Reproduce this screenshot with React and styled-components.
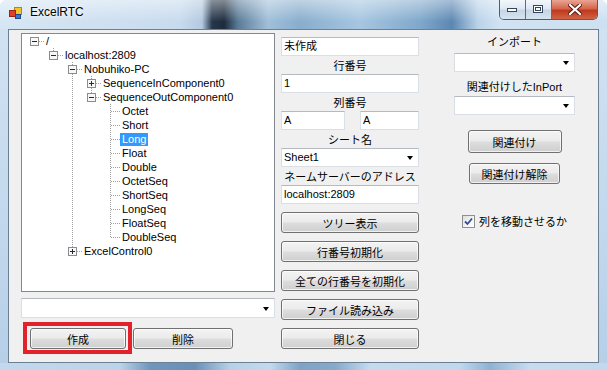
import React from 'react';
import styled, { createGlobalStyle } from 'styled-components';

const GlobalStyle = createGlobalStyle`
  html, body {
    margin: 0;
    padding: 0;
    background: #ffffff;
  }
  body {
    font-family: 'Liberation Sans', 'Noto Sans CJK JP', sans-serif;
    font-size: 11px;
    color: #000;
  }
`;

const Window = styled.div`
  width: 607px;
  height: 370px;
  display: flex;
  flex-direction: column;
  border-radius: 7px 7px 0 0;
  overflow: hidden;
  background: linear-gradient(180deg, #d3e3f2 0%, #c4d9ed 55%, #b6cfe7 100%);
`;

const TitleBar = styled.div`
  height: 29px;
  flex: none;
  display: flex;
  align-items: flex-start;
  padding-left: 9px;
  background:
    linear-gradient(180deg, rgba(255, 255, 255, 0.45), rgba(255, 255, 255, 0) 75%),
    linear-gradient(
      90deg,
      #d6e6f4 0px,
      #c8dbee 180px,
      #b3c9df 202px,
      #26374b 212px,
      #1d2b3c 224px,
      #5a7b98 238px,
      #a0bfd9 268px,
      #88adcd 300px,
      #a6c6e0 360px,
      #7fa8cb 420px,
      #5c87b2 452px,
      #bad3e9 478px,
      #d1e3f2 500px,
      #cde0f0 607px
    );
`;

const AppIcon = styled.svg`
  flex: none;
  margin-top: 6px;
  display: block;
`;

const Caption = styled.span`
  margin: 5px 0 0 8px;
  font-family: 'Liberation Sans', 'Open Sans', sans-serif;
  font-size: 12px;
  line-height: 15px;
  color: #000;
  text-shadow: 0 0 6px rgba(255, 255, 255, 0.95), 0 0 2px rgba(255, 255, 255, 0.9);
`;

const CaptionButtons = styled.div`
  margin-left: auto;
  margin-right: 9px;
  display: flex;
  height: 19px;
  border: 1px solid #4b5e74;
  border-top: none;
  border-radius: 0 0 5px 5px;
  overflow: hidden;
`;

const CaptionButton = styled.div`
  width: ${p => p.$w}px;
  height: 19px;
  display: flex;
  align-items: center;
  justify-content: center;
  border-left: ${p => (p.$first ? 'none' : '1px solid #5b6e85')};
  background: ${p =>
    p.$close
      ? 'linear-gradient(180deg, #e9a593 0%, #d5664c 45%, #bf3a1e 55%, #d26244 100%)'
      : 'linear-gradient(180deg, #f3f7fb 0%, #dfe8f2 45%, #c6d6e6 55%, #d7e4f0 100%)'};
`;

const Client = styled.div`
  margin: 0 8px;
  height: 334px;
  box-sizing: border-box;
  flex: none;
  display: flex;
  align-items: flex-start;
  border: 1px solid #6b7f95;
  background: #f0f0f0;
`;

const BottomEdge = styled.div`
  flex: 1;
  background: linear-gradient(
    90deg,
    #c3d8ec 0px,
    #bcd3e8 120px,
    #7096bb 150px,
    #6b90b6 195px,
    #b8d0e6 230px,
    #c4d9ec 270px,
    #7fa3c6 300px,
    #86a9ca 335px,
    #c6daed 370px,
    #c1d7eb 460px,
    #8fb2d2 490px,
    #c9dcee 530px,
    #c2d8ec 607px
  );
`;

/* ---------- left column ---------- */

const LeftColumn = styled.div`
  width: 254px;
  margin: 3px 0 0 12px;
  display: flex;
  flex-direction: column;
`;

const TreeBox = styled.div`
  height: 259px;
  box-sizing: border-box;
  border: 1px solid #828790;
  background: #fff;
  padding: 0 0 0 3px;
  overflow: hidden;
`;

const TreeRow = styled.div`
  display: flex;
  align-items: center;
  height: 14px;
`;

const CellSvg = styled.svg`
  flex: none;
  display: block;
`;

const TreeText = styled.span`
  height: 13px;
  line-height: 13px;
  padding: 0 2px;
  white-space: nowrap;
  color: ${p => (p.$selected ? '#fff' : '#000')};
  background: ${p => (p.$selected ? '#3399ff' : 'transparent')};
`;

const BottomRow = styled.div`
  display: flex;
  align-items: flex-start;
  margin-top: 4px;
  padding-left: 2px;
`;

const Highlight = styled.div`
  border: 4px solid #e3212b;
  padding: 2px 2px 1px 3px;
  display: flex;
`;

/* ---------- shared controls ---------- */

const TextBox = styled.div`
  height: ${p => p.$h || 19}px;
  width: ${p => (p.$w ? `${p.$w}px` : 'auto')};
  box-sizing: border-box;
  border: 1px solid #dadee5;
  border-top-color: #b5b9c0;
  background: #fff;
  padding-left: 2px;
  line-height: 17px;
  white-space: nowrap;
`;

const Combo = styled.div`
  height: ${p => p.$h || 19}px;
  box-sizing: border-box;
  display: flex;
  align-items: center;
  border: 1px solid #dadee5;
  border-top-color: #b5b9c0;
  background: #fff;
  padding: 0 5px 0 2px;
  margin-top: ${p => p.$mt || 0}px;
`;

const ComboText = styled.span`
  flex: 1;
  line-height: 17px;
`;

const Arrow = styled.span`
  flex: none;
  width: 0;
  height: 0;
  border-left: 3.5px solid transparent;
  border-right: 3.5px solid transparent;
  border-top: 4px solid #000;
  margin-top: 1px;
`;

const Button = styled.button`
  width: ${p => p.$w}px;
  height: ${p => p.$h || 21}px;
  flex: none;
  margin: ${p => p.$m || '0'};
  padding: 0;
  box-sizing: border-box;
  border: 1px solid #707070;
  border-radius: 3px;
  font: inherit;
  font-size: 11px;
  color: #000;
  background: linear-gradient(180deg, #f3f3f3 0%, #ebebeb 48%, #dddddd 52%, #cfcfcf 100%);
  box-shadow: inset 0 0 0 1px rgba(255, 255, 255, 0.7);
  display: flex;
  align-items: center;
  justify-content: center;
`;

const FieldLabel = styled.div`
  height: ${p => p.$h || 18}px;
  box-sizing: border-box;
  padding-top: ${p => p.$pt ?? 3}px;
  margin-top: ${p => p.$mt || 0}px;
  line-height: 15px;
  text-align: center;
  white-space: nowrap;
`;

/* ---------- middle column ---------- */

const MiddleColumn = styled.div`
  width: 138px;
  margin: 7px 0 0 6px;
  display: flex;
  flex-direction: column;
`;

const PairRow = styled.div`
  display: flex;
  justify-content: space-between;
`;

const ButtonStack = styled.div`
  display: flex;
  flex-direction: column;
  gap: 8px;
  margin-top: 8px;
`;

/* ---------- right column ---------- */

const RightColumn = styled.div`
  width: 121px;
  margin: 5px 0 0 35px;
  display: flex;
  flex-direction: column;
  align-items: stretch;
`;

const CenteredButton = styled(Button)`
  align-self: center;
`;

const CheckRow = styled.label`
  display: flex;
  align-items: center;
  gap: 4px;
  margin: 29px 0 0 8px;
  white-space: nowrap;
`;

const CheckBox = styled.span`
  width: 13px;
  height: 13px;
  flex: none;
  box-sizing: border-box;
  border: 1px solid #8e8f8f;
  background: linear-gradient(135deg, #dcdcdc 0%, #f6f6f6 60%, #ffffff 100%);
  display: flex;
  align-items: center;
  justify-content: center;
`;

/* ---------- tree data ---------- */

const leafNames = [
  'Octet', 'Short', 'Long', 'Float', 'Double',
  'OctetSeq', 'ShortSeq', 'LongSeq', 'FloatSeq', 'DoubleSeq',
];

const treeData = {
  label: '/',
  open: true,
  children: [
    {
      label: 'localhost:2809',
      open: true,
      children: [
        {
          label: 'Nobuhiko-PC',
          open: true,
          children: [
            { label: 'SequenceInComponent0', open: false, children: [{ label: 'in' }] },
            {
              label: 'SequenceOutComponent0',
              open: true,
              children: leafNames.map(n => ({ label: n, selected: n === 'Long' })),
            },
          ],
        },
        { label: 'ExcelControl0', open: false, children: [{ label: 'ctl' }] },
      ],
    },
  ],
};

function flatten(node, depth, guides, isLast, out) {
  const hasKids = !!node.children;
  out.push({
    label: node.label,
    depth,
    guides,
    isLast,
    expander: hasKids ? (node.open ? 'minus' : 'plus') : null,
    selected: node.selected,
  });
  if (hasKids && node.open) {
    node.children.forEach((c, i) =>
      flatten(c, depth + 1, [...guides, !isLast], i === node.children.length - 1, out)
    );
  }
  return out;
}

const rows = flatten(treeData, 0, [], true, []);

const dot = { stroke: '#a0a0a0', strokeWidth: 1, strokeDasharray: '1 1' };

function GuideCell({ on }) {
  return (
    <CellSvg width="19" height="14">
      {on && <line x1="9.5" y1="0" x2="9.5" y2="14" {...dot} />}
    </CellSvg>
  );
}

function NodeCell({ depth, isLast, expander }) {
  return (
    <CellSvg width="19" height="14">
      {depth > 0 && <line x1="9.5" y1="0" x2="9.5" y2="7" {...dot} />}
      {!isLast && <line x1="9.5" y1="8" x2="9.5" y2="14" {...dot} />}
      <line x1="10" y1="7.5" x2="19" y2="7.5" {...dot} />
      {expander && (
        <g>
          <rect x="5.5" y="3.5" width="8" height="8" fill="#f7f7f7" stroke="#8c8c8c" />
          <line x1="7" y1="7.5" x2="12" y2="7.5" stroke="#1f2a3a" />
          {expander === 'plus' && <line x1="9.5" y1="5" x2="9.5" y2="10" stroke="#1f2a3a" />}
        </g>
      )}
    </CellSvg>
  );
}

function App() {
  return (
    <>
      <GlobalStyle />
      <Window>
        <TitleBar>
          <AppIcon width="13" height="13" viewBox="0 0 13 13">
            <rect x="5.5" y="1.5" width="7" height="7" fill="#f6c22a" stroke="#b8860b" />
            <rect x="0.5" y="4.5" width="6" height="6" fill="#e0402a" stroke="#9a2414" />
            <rect x="6.5" y="8.5" width="5" height="4" fill="#3a78d0" stroke="#1c4a8c" />
          </AppIcon>
          <Caption>ExcelRTC</Caption>
          <CaptionButtons>
            <CaptionButton $w={25} $first>
              <svg width="11" height="6" viewBox="0 0 11 6">
                <rect x="0.5" y="1.5" width="9" height="3" fill="#fff" stroke="#34465c" />
              </svg>
            </CaptionButton>
            <CaptionButton $w={25}>
              <svg width="11" height="9" viewBox="0 0 11 9">
                <rect x="0.5" y="0.5" width="9" height="7" fill="#fff" stroke="#34465c" />
                <rect x="2.5" y="2.5" width="5" height="3" fill="none" stroke="#34465c" />
              </svg>
            </CaptionButton>
            <CaptionButton $w={45} $close>
              <svg width="14" height="11" viewBox="0 0 14 11">
                <path d="M2 1 L12 10 M12 1 L2 10" stroke="#5a1508" strokeWidth="4" strokeLinecap="square" />
                <path d="M2 1 L12 10 M12 1 L2 10" stroke="#ffffff" strokeWidth="2.2" strokeLinecap="square" />
              </svg>
            </CaptionButton>
          </CaptionButtons>
        </TitleBar>

        <Client>
          <LeftColumn>
            <TreeBox>
              {rows.map((r, i) => (
                <TreeRow key={i}>
                  {r.guides.map((g, j) => (
                    <GuideCell key={j} on={g} />
                  ))}
                  <NodeCell depth={r.depth} isLast={r.isLast} expander={r.expander} />
                  <TreeText $selected={r.selected}>{r.label}</TreeText>
                </TreeRow>
              ))}
            </TreeBox>
            <Combo $h={20} $mt={6}>
              <ComboText />
              <Arrow />
            </Combo>
            <BottomRow>
              <Highlight>
                <Button $w={96}>作成</Button>
              </Highlight>
              <Button $w={100} $m="6px 0 0 1px">削除</Button>
            </BottomRow>
          </LeftColumn>

          <MiddleColumn>
            <TextBox>未作成</TextBox>
            <FieldLabel>行番号</FieldLabel>
            <TextBox>1</TextBox>
            <FieldLabel>列番号</FieldLabel>
            <PairRow>
              <TextBox $w={64}>A</TextBox>
              <TextBox $w={59}>A</TextBox>
            </PairRow>
            <FieldLabel>シート名</FieldLabel>
            <Combo>
              <ComboText>Sheet1</ComboText>
              <Arrow />
            </Combo>
            <FieldLabel>ネームサーバーのアドレス</FieldLabel>
            <TextBox>localhost:2809</TextBox>
            <ButtonStack>
              <Button $w={138}>ツリー表示</Button>
              <Button $w={138}>行番号初期化</Button>
              <Button $w={138}>全ての行番号を初期化</Button>
              <Button $w={138}>ファイル読み込み</Button>
              <Button $w={138}>閉じる</Button>
            </ButtonStack>
          </MiddleColumn>

          <RightColumn>
            <FieldLabel $pt={0} $h={18}>インポート</FieldLabel>
            <Combo>
              <ComboText />
              <Arrow />
            </Combo>
            <FieldLabel $pt={0} $h={16} $mt={8}>関連付けしたInPort</FieldLabel>
            <Combo>
              <ComboText />
              <Arrow />
            </Combo>
            <CenteredButton $w={94} $h={23} $m="15px 0 0 0">関連付け</CenteredButton>
            <CenteredButton $w={91} $m="10px 0 0 0">関連付け解除</CenteredButton>
            <CheckRow>
              <CheckBox>
                <svg width="9" height="9" viewBox="0 0 9 9">
                  <path d="M1 4.5 L3.5 7 L8 1.5" fill="none" stroke="#2b4f9e" strokeWidth="1.8" />
                </svg>
              </CheckBox>
              列を移動させるか
            </CheckRow>
          </RightColumn>
        </Client>
        <BottomEdge />
      </Window>
    </>
  );
}

export default App;
